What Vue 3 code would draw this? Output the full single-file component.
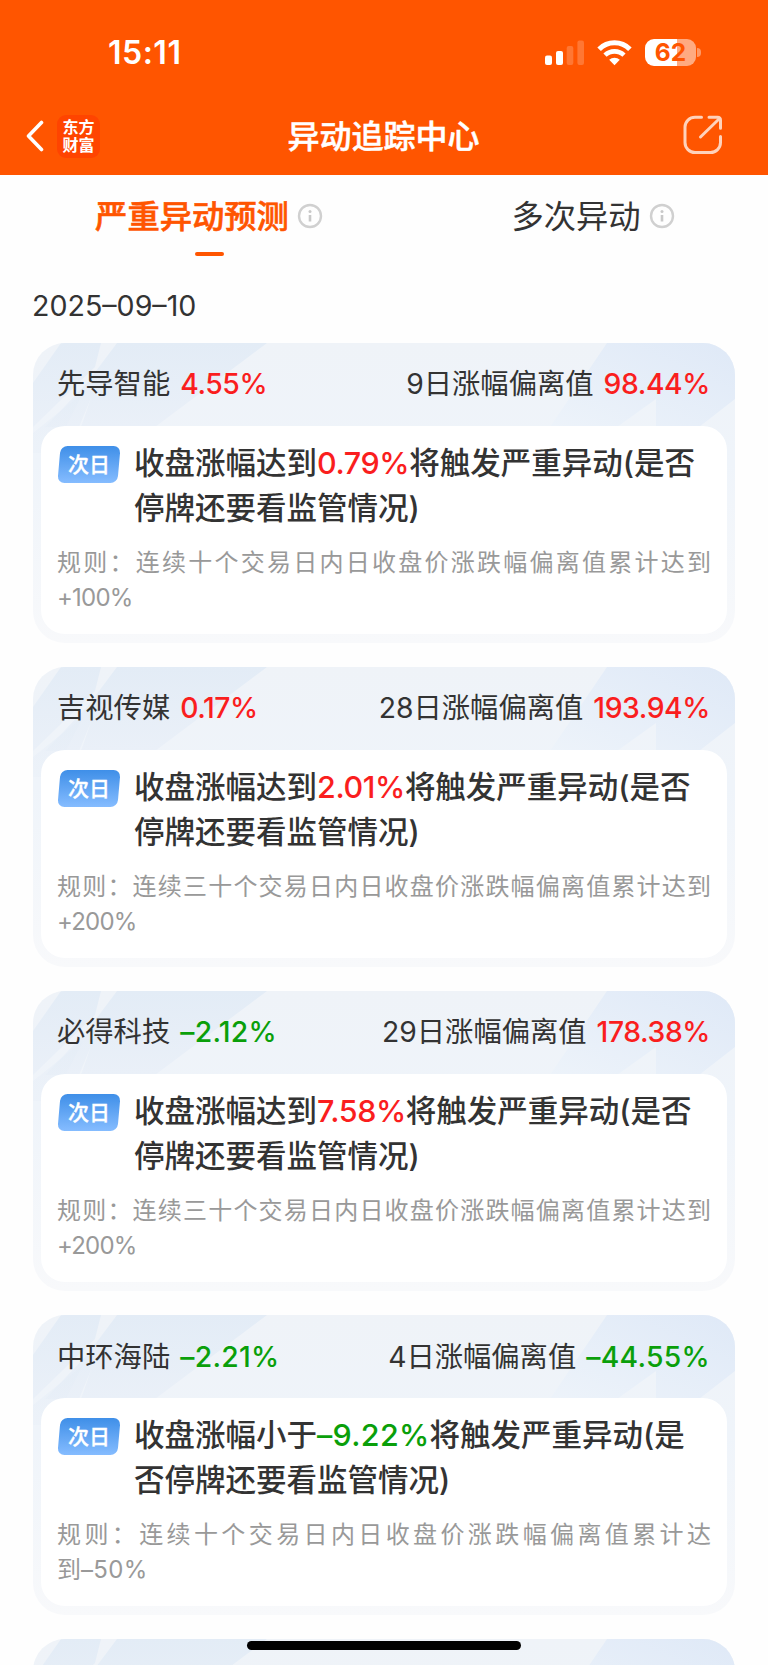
<template>
  <div class="page">
    <header class="top">
      <div class="status-bar">
        <span class="time">15:11</span>
        <div class="status-icons">
          <svg class="signal" width="40" height="26" viewBox="0 0 40 26">
            <rect x="0" y="15.5" width="7" height="9.5" rx="2" fill="#fff" />
            <rect x="11" y="11" width="7" height="14" rx="2" fill="#fff" />
            <rect x="21.7" y="6" width="6.6" height="19" rx="2" fill="#fff" fill-opacity="0.2" />
            <rect x="32.4" y="0.5" width="6.6" height="24.5" rx="2" fill="#fff" fill-opacity="0.2" />
          </svg>
          <svg class="wifi" width="35" height="26" viewBox="0 0 35 26">
            <path d="M2.1 9.2a21.8 21.8 0 0 1 30.8 0" fill="none" stroke="#fff" stroke-width="5" />
            <path d="M8 15.2a13.6 13.6 0 0 1 19 0" fill="none" stroke="#fff" stroke-width="4.6" />
            <path d="M17.5 25.2l-5.3-5.4a7.6 7.6 0 0 1 10.6 0z" fill="#fff" />
          </svg>
          <div class="battery">
            <div class="battery-body">62</div>
            <div class="battery-cap"></div>
          </div>
        </div>
      </div>

      <nav class="nav-bar">
        <div class="nav-left">
          <svg width="18" height="32" viewBox="0 0 18 32">
            <path d="M15.5 2.5L2.5 16l13 13.5" fill="none" stroke="#fff" stroke-width="3.6" stroke-linecap="round" stroke-linejoin="round" />
          </svg>
          <div class="logo">
            <span>东方</span>
            <span>财富</span>
          </div>
        </div>
        <h1 class="nav-title">异动追踪中心</h1>
        <svg class="share" width="40" height="40" viewBox="0 0 40 40">
          <g fill="none" stroke="#ffd2bb" stroke-width="3" stroke-linecap="round" stroke-linejoin="round">
            <path d="M18.5 2.2H12A10 10 0 0 0 2 12v15.5a10 10 0 0 0 10 10h15.5a10 10 0 0 0 10-10v-6" />
            <path d="M26 2.2h8.5q3 0 3 3v8" />
            <path d="M36 4L17.5 22" />
          </g>
        </svg>
      </nav>
    </header>

    <div class="tabs">
      <div
        v-for="tab in tabs"
        :key="tab.id"
        class="tab"
        :class="{ active: tab.id === activeTab }"
        @click="activeTab = tab.id"
      >
        <div class="tab-label">
          <span>{{ tab.name }}</span>
          <svg width="26" height="26" viewBox="0 0 26 26">
            <circle cx="13" cy="13" r="11" fill="none" stroke="#d0d0d0" stroke-width="2.4" />
            <circle cx="13" cy="8.5" r="1.5" fill="#c8c8c8" />
            <path d="M13 12v6.5" stroke="#c8c8c8" stroke-width="2.6" />
          </svg>
        </div>
        <i class="tab-line"></i>
      </div>
    </div>

    <div class="date">2025–09–10</div>

    <div class="card-list">
      <section v-for="item in stocks" :key="item.id" class="card">
        <svg class="card-bg" width="702" height="110" viewBox="0 0 702 110">
          <defs>
            <linearGradient :id="'l' + item.id" x1="0" y1="0" x2="0" y2="1">
              <stop offset="0" stop-color="#e3ecf6" />
              <stop offset="1" stop-color="#eaf0f8" />
            </linearGradient>
            <linearGradient :id="'r' + item.id" x1="1" y1="0" x2="0" y2="1">
              <stop offset="0" stop-color="#dfe9f7" />
              <stop offset="1" stop-color="#edf3fa" />
            </linearGradient>
          </defs>
          <g :fill="`url(#l${item.id})`">
            <path d="M28 0H68L62 24L0 84V40Z" />
            <path d="M84 0H234L122 84H48L58 55L46 84H12L54 40Z" />
            <path d="M0 90L50 50L20 110H0Z" fill-opacity="0.5" />
          </g>
          <path d="M574 0H702V56L666 84H623V56L584 84H517Z" :fill="`url(#r${item.id})`" />
        </svg>
        <template v-if="item.name">
          <div class="card-head">
            <div class="head-item">
              <span>{{ item.name }}</span>
              <b :class="trend(item.change)">{{ item.change }}</b>
            </div>
            <div class="head-item">
              <span>{{ item.days }}日涨幅偏离值</span>
              <b :class="trend(item.deviation)">{{ item.deviation }}</b>
            </div>
          </div>
          <div class="card-body">
            <div class="notice">
              <span class="badge"><em>次日</em></span>
              <p class="notice-text">收盘涨幅{{ item.verb }}<span :class="trend(item.trigger)">{{ item.trigger }}</span>将触发严重异动(是否停牌还要看监管情况)</p>
            </div>
            <p class="rule">规则：连续{{ item.period }}个交易日内日收盘价涨跌幅偏离值累计达{{ '到' + joiner(item.limit) }}<span class="limit" :class="{ minus: item.limit.startsWith('–') }">{{ item.limit }}</span></p>
          </div>
        </template>
      </section>
    </div>

    <div class="home-indicator"></div>
  </div>
</template>

<script setup>
import { ref } from 'vue'

const activeTab = ref('predict')

const tabs = [
  { id: 'predict', name: '严重异动预测' },
  { id: 'multiple', name: '多次异动' }
]

const stocks = ref([
  { id: 1, name: '先导智能', change: '4.55%', days: 9, deviation: '98.44%', verb: '达到', trigger: '0.79%', period: '十', limit: '+100%' },
  { id: 2, name: '吉视传媒', change: '0.17%', days: 28, deviation: '193.94%', verb: '达到', trigger: '2.01%', period: '三十', limit: '+200%' },
  { id: 3, name: '必得科技', change: '–2.12%', days: 29, deviation: '178.38%', verb: '达到', trigger: '7.58%', period: '三十', limit: '+200%' },
  { id: 4, name: '中环海陆', change: '–2.21%', days: 4, deviation: '–44.55%', verb: '小于', trigger: '–9.22%', period: '十', limit: '–50%' },
  { id: 5 }
])

function trend(value) {
  return value.startsWith('–') ? 'down' : 'up'
}

// a dash must not be split from the character before it
function joiner(limit) {
  return limit.startsWith('–') ? '\u2060' : ''
}
</script>

<style>
body {
  margin: 0;
  background: #fff;
}
</style>

<style scoped>
.page {
  position: relative;
  width: 768px;
  height: 1665px;
  overflow: hidden;
  background: #fefefe;
  color: #333;
  font-family: Inter, "Noto Sans CJK SC", sans-serif;
}

.top {
  height: 175px;
  background: #ff5500;
  color: #fff;
}

/* Status bar */
.status-bar {
  display: flex;
  justify-content: space-between;
  align-items: center;
  height: 105px;
  padding: 0 67px 0 108px;
}

.time {
  font-size: 32px;
  font-weight: 600;
  letter-spacing: 0.5px;
}

.status-icons {
  display: flex;
  align-items: center;
}

.wifi {
  margin-left: 12px;
}

.battery {
  display: flex;
  align-items: center;
  margin-left: 13px;
}

.battery-body {
  width: 51px;
  height: 27px;
  border-radius: 9px;
  background: linear-gradient(90deg, #fff 32px, #ffaa80 32px);
  color: #ff5500;
  font-size: 24.5px;
  font-weight: 700;
  line-height: 27px;
  text-align: center;
}

.battery-cap {
  width: 4px;
  height: 9px;
  margin-left: 1px;
  border-radius: 0 5px 5px 0;
  background: #ff9966;
}

/* Navigation */
.nav-bar {
  display: grid;
  grid-template-columns: 1fr auto 1fr;
  align-items: center;
  height: 62px;
  padding: 0 45px 0 26px;
}

.nav-left {
  display: flex;
  align-items: center;
  gap: 13px;
}

.logo {
  display: flex;
  flex-direction: column;
  align-items: center;
  justify-content: center;
  width: 43px;
  height: 43px;
  border-radius: 9px;
  background: #ff4400;
  font-size: 16px;
  font-weight: 700;
  line-height: 18px;
}

.nav-title {
  margin: 0 0 4px 18px;
  font-size: 32px;
  font-weight: 500;
  -webkit-text-stroke: 0.5px #fff;
}

.share {
  justify-self: end;
  margin-bottom: 3px;
}

/* Tabs */
.tabs {
  display: flex;
  height: 92px;
}

.tab {
  flex: 1;
  display: flex;
  flex-direction: column;
  align-items: center;
  padding: 17px 0 0 34px;
}

.tab-label {
  display: flex;
  align-items: center;
  gap: 8px;
  height: 48px;
  font-size: 32.3px;
}

.tab-label span {
  padding-bottom: 4px;
}

.tab-line {
  width: 29px;
  height: 4px;
  margin-top: 12px;
  border-radius: 2px;
}

.tab.active {
  color: #ff5500;
  font-weight: 500;
}

.tab.active span {
  -webkit-text-stroke: 0.6px #ff5500;
}

.tab.active .tab-line {
  background: #ff5500;
}

.date {
  height: 75.5px;
  padding-left: 32px;
  font-size: 28.6px;
  line-height: 77px;
}

/* Cards */
.card-list {
  display: flex;
  flex-direction: column;
  gap: 24.1px;
  padding: 0 33px;
}

.card {
  position: relative;
  flex-shrink: 0;
  height: 300px;
  padding: 0 8px 8px;
  border-radius: 32px;
  background: linear-gradient(180deg, #eff3f8 0%, #eff4fa 40%, #f8f9fb 100%);
  box-sizing: border-box;
  overflow: hidden;
}

.card-bg {
  position: absolute;
  top: 0;
  left: 0;
}

.card-head {
  position: relative;
  display: flex;
  justify-content: space-between;
  align-items: center;
  height: 83.5px;
  padding: 0 17px 5px 16px;
  font-size: 28.3px;
  box-sizing: border-box;
}

.head-item {
  display: flex;
  align-items: baseline;
  gap: 10px;
}

.head-item b {
  font-weight: 500;
}

.up {
  color: #fa1e1e;
  letter-spacing: -0.4px;
}

.down {
  color: #0a9f0a;
  letter-spacing: 0.3px;
}

.card-body {
  position: relative;
  height: 208px;
  padding: 13.5px 16px 0;
  border-radius: 24px;
  background: #fff;
  box-sizing: border-box;
}

.notice {
  display: flex;
  align-items: flex-start;
}

.badge {
  flex-shrink: 0;
  width: 60px;
  height: 37px;
  margin: 6px 15px 0 2px;
  border-radius: 7px;
  background: linear-gradient(180deg, #3f8fe8, #85bcff);
  color: #fff;
  font-size: 21px;
  font-weight: 500;
  line-height: 37px;
  text-align: center;
  transform: skewX(-5deg);
}

.badge em {
  display: block;
  font-style: normal;
  -webkit-text-stroke: 0.3px #fff;
  transform: skewX(5deg);
}

.notice-text {
  flex: 1;
  margin: 0;
  font-size: 30.5px;
  font-weight: 500;
  line-height: 45px;
}

.rule {
  margin: 15px 0 0;
  color: #999;
  font-size: 24px;
  line-height: 35.5px;
  text-align: justify;
}

.limit {
  letter-spacing: -0.8px;
  white-space: nowrap;
}

.limit.minus {
  letter-spacing: 0.3px;
}

.home-indicator {
  position: absolute;
  left: 247px;
  bottom: 15px;
  width: 274px;
  height: 9px;
  border-radius: 5px;
  background: #000;
}
</style>
